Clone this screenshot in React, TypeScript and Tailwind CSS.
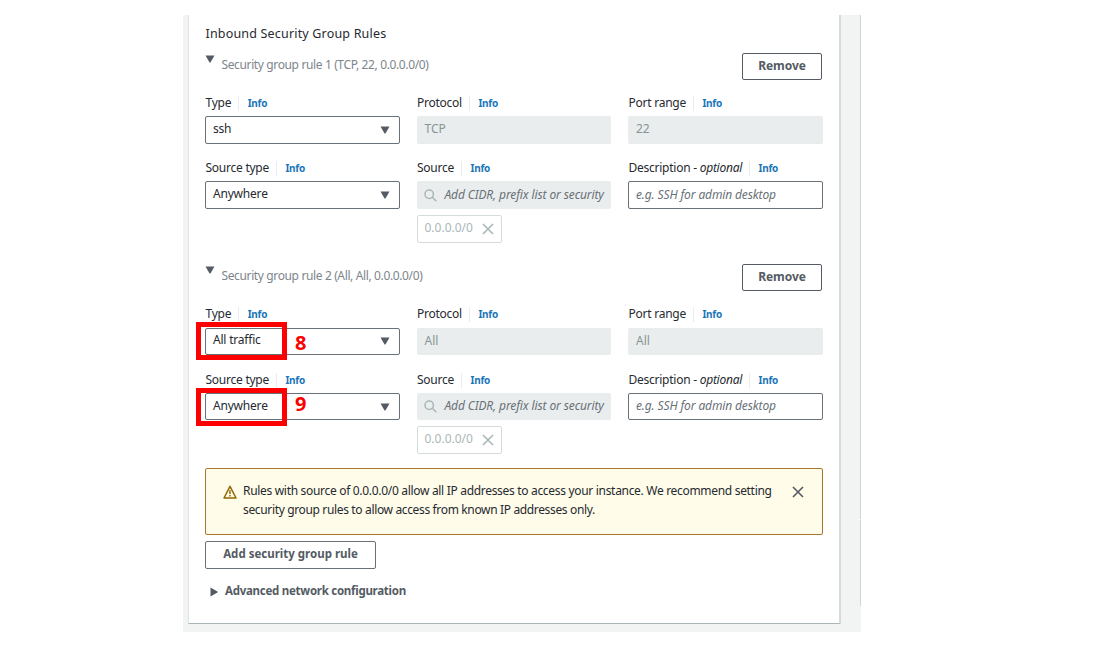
import React from "react";

const CaretDown = ({ className }: { className?: string }) => (
  <svg width="10" height="8" viewBox="0 0 10 8" className={className}>
    <path d="M0.5 0.5h9L5.6 7.2q-.6.8-1.2 0z" fill="#545b64" />
  </svg>
);

const Cross = ({ size, color }: { size: number; color: string }) => (
  <svg width={size} height={size} viewBox="0 0 12 12" className="shrink-0">
    <path d="M1 1l10 10M11 1L1 11" stroke={color} strokeWidth="1.6" fill="none" />
  </svg>
);

function Label({ text, optional }: { text: string; optional?: boolean }) {
  return (
    <div className="flex h-[26px] items-center pl-[0.5px] whitespace-nowrap">
      <span className="text-[12px] leading-[16px] tracking-[-0.25px] text-[#262a30]">
        {text}
        {optional && <i> optional</i>}
      </span>
      <span className="ml-[7px] h-[15px] w-px bg-[#eaeded]" />
      <span className="ml-[8.5px] text-[10px] leading-[14px] font-bold tracking-[-0.25px] text-[#1a76b8]">Info</span>
    </div>
  );
}

function Select({ value, raised }: { value: string; raised?: boolean }) {
  return (
    <div
      className={`flex h-full items-center justify-between rounded-[2px] border border-[#687078] bg-white pr-[9px] pl-[7px] ${raised ? "pb-[2px]" : ""}`}
    >
      <span className="pb-[2px] text-[12px] leading-[16px] tracking-[-0.2px] text-[#262a30]">{value}</span>
      <CaretDown />
    </div>
  );
}

function Disabled({ value }: { value: string }) {
  return (
    <div className="mr-[0.5px] flex h-full items-center rounded-[2px] bg-[#eaeded] pb-[2px] pl-[8px] text-[12px] leading-[16px] text-[#879596]">
      {value}
    </div>
  );
}

function Search({ raised }: { raised?: boolean }) {
  return (
    <div className="mr-[0.5px] flex h-full items-center rounded-[2px] bg-[#eaeded] pl-[7px]">
      <svg width="13" height="13" viewBox="0 0 13 13" className="shrink-0">
        <circle cx="5.2" cy="5.2" r="4.2" fill="none" stroke="#aab7b8" strokeWidth="1.5" />
        <path d="M8.3 8.3l4 4" stroke="#aab7b8" strokeWidth="1.6" />
      </svg>
      <span
        className={`ml-[8px] text-[12px] leading-[16px] tracking-[-0.12px] whitespace-nowrap text-[#687078] italic ${raised ? "pb-[2px]" : ""}`}
      >
        Add CIDR, prefix list or security
      </span>
    </div>
  );
}

function Description({ raised }: { raised?: boolean }) {
  return (
    <div
      className={`flex h-full items-center rounded-[2px] border border-[#687078] bg-white pl-[7px] text-[12px] leading-[16px] tracking-[-0.13px] text-[#687078] italic ${raised ? "pb-[2px]" : ""}`}
    >
      e.g. SSH for admin desktop
    </div>
  );
}

function Token() {
  return (
    <div className="flex h-[28px] w-[85px] items-center justify-between rounded-[2px] border border-[#d5dbdb] pr-[7px] pl-[7px]">
      <span className="pb-[2px] text-[12px] leading-[16px] text-[#aab7b8]">0.0.0.0/0</span>
      <Cross size={12} color="#aab7b8" />
    </div>
  );
}

function Highlight({ n, box, digit }: { n: string; box: string; digit: string }) {
  return (
    <>
      <div className={`absolute -left-[9px] h-[38px] w-[91px] border-[5px] border-[#fe0000] ${box}`} />
      <span className={`absolute left-[90px] text-[20px] leading-[24px] font-bold text-[#fe0000] ${digit}`}>{n}</span>
    </>
  );
}

type RuleProps = {
  title: string;
  type: string;
  protocol: string;
  port: string;
  numbers?: [string, string];
};

function Rule({ title, type, protocol, port, numbers }: RuleProps) {
  const cols = "grid grid-cols-[195px_195px_195px] gap-x-[16.5px]";
  const second = !!numbers;
  return (
    <section>
      <div className="flex h-[27px] justify-between">
        <div className="flex">
          <CaretDown className="mt-[2px]" />
          <span className="mt-[4px] ml-[6.5px] text-[12px] leading-[16px] tracking-[-0.37px] text-[#7d858c]">
            {title}
          </span>
        </div>
        <button className="mr-px h-[27px] w-[80px] rounded-[2px] border border-[#545b64] pb-[2px] text-[12px] leading-[16px] font-bold tracking-[-0.1px] text-[#545b64]">
          Remove
        </button>
      </div>
      <div className={`${cols} mt-[10px]`}>
        <Label text="Type" />
        <Label text="Protocol" />
        <Label text="Port range" />
      </div>
      <div className={`${cols} ${second ? "mt-px h-[27px]" : "h-[28px]"}`}>
        <div className="relative">
          <Select value={type} raised={second} />
          {numbers && <Highlight n={numbers[0]} box="-top-[6px]" digit="top-[3px]" />}
        </div>
        <Disabled value={protocol} />
        <Disabled value={port} />
      </div>
      <div className={`${cols} ${second ? "mt-[12px]" : "mt-[11px]"}`}>
        <Label text="Source type" />
        <Label text="Source" />
        <Label text="Description -" optional />
      </div>
      <div className={`${cols} ${second ? "h-[27px]" : "h-[28px]"}`}>
        <div className="relative">
          <Select value="Anywhere" />
          {numbers && <Highlight n={numbers[1]} box="-top-[5px]" digit="-top-px" />}
        </div>
        <Search raised={second} />
        <Description raised={second} />
      </div>
      <div className={`${cols} mt-[6px]`}>
        <div />
        <Token />
      </div>
    </section>
  );
}

export default function App() {
  return (
    <div className="h-[650px] w-[1118px] overflow-hidden bg-white pt-[15px] pl-[183px] font-['Noto_Sans','Open_Sans',sans-serif]">
      <div className="flex h-[617px] w-[678px] bg-[#f2f3f3] pl-[5px]">
        <main className="h-[609px] w-[653px] border-r-2 border-b border-l border-r-[#d5dbdb] border-b-[#aab7b8] border-l-[#e1e4e4] bg-white pl-[16px]">
          <div className="w-[618px]">
            <h2 className="flex h-[38px] items-center pl-[0.5px] text-[12.5px] leading-[18px] tracking-[0.18px] text-[#262a30]">
              Inbound Security Group Rules
            </h2>
            <Rule title="Security group rule 1 (TCP, 22, 0.0.0.0/0)" type="ssh" protocol="TCP" port="22" />
            <div className="h-[21px]" />
            <Rule
              title="Security group rule 2 (All, All, 0.0.0.0/0)"
              type="All traffic"
              protocol="All"
              port="All"
              numbers={["8", "9"]}
            />
            <div className="mt-[14px] flex h-[67px] rounded-[2px] border border-[#a9772c] bg-[#fffce9] pt-[12px] pr-[18px] pl-[17px]">
              <svg width="14" height="14" viewBox="0 0 14 14" className="mt-[4px] shrink-0">
                <path d="M7 1.4L13 13H1z" fill="none" stroke="#906806" strokeWidth="1.5" strokeLinejoin="round" />
                <path d="M7 5.2v3.8M7 10v1.6" stroke="#906806" strokeWidth="1.5" />
              </svg>
              <p className="ml-[6px] text-[12px] leading-[19px] tracking-[-0.31px] whitespace-nowrap text-[#262a30]">
                Rules with source of 0.0.0.0/0 allow all IP addresses to access your instance. We recommend setting
                <br />
                <span className="tracking-[-0.35px]">
                  security group rules to allow access from known IP addresses only.
                </span>
              </p>
              <div className="mt-[5px] ml-auto">
                <Cross size={12} color="#545b64" />
              </div>
            </div>
            <button className="mt-[6px] block h-[28px] w-[171px] rounded-[2px] border border-[#687078] pb-[3px] text-[11.5px] leading-[16px] font-bold text-[#545b64]">
              Add security group rule
            </button>
            <div className="mt-[13px] flex h-[18px] items-center">
              <svg width="8" height="10" viewBox="0 0 8 10" className="mt-[2px] ml-[5px]">
                <path d="M0.5 0.5v9L7.4 5.6q.8-.6 0-1.2z" fill="#545b64" />
              </svg>
              <span className="ml-[7px] text-[11.5px] leading-[16px] font-bold tracking-[-0.27px] text-[#545b64]">
                Advanced network configuration
              </span>
            </div>
          </div>
        </main>
        <div className="ml-auto flex w-px flex-col">
          <div className="h-[504px] bg-[#d0d4d5]" />
          <div className="mt-px h-[86px] bg-[#d0d4d5]" />
        </div>
      </div>
    </div>
  );
}
